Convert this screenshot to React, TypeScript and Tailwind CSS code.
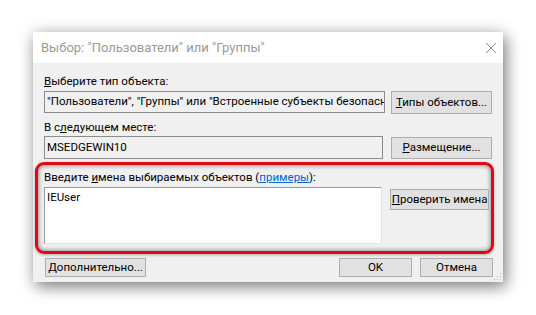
import React from "react";

const font = { fontFamily: 'Roboto, "Liberation Sans", Arial, sans-serif' };

const Btn: React.FC<{ className?: string; children: React.ReactNode }> = ({ className = "", children }) => (
  <div
    className={`flex items-center justify-center whitespace-nowrap bg-[#e1e1e1] border border-[#adadad] text-[11.5px] text-black leading-none ${className}`}
  >
    {children}
  </div>
);

const App: React.FC = () => {
  return (
    <div className="w-[536px] h-[315px] bg-white pt-[32px] pl-[33px] overflow-hidden" style={font}>
      <div className="relative w-[470px] h-[250px] bg-[#f0f0f0] flex flex-col shadow-[3px_5px_14px_rgba(0,0,0,0.45),0_0_18px_rgba(0,0,0,0.12)]">
        {/* title bar */}
        <div className="h-[31px] bg-white flex items-center justify-between pl-[8px] pr-[1px] shrink-0">
          <span className="text-[13px] text-[#9a9a9a]">Выбор: "Пользователи" или "Группы"</span>
          <svg width="22" height="22" viewBox="0 0 22 22">
            <path d="M6 6 L16 16 M16 6 L6 16" stroke="#8a8a8a" strokeWidth="1" fill="none" />
          </svg>
        </div>

        {/* body */}
        <div className="flex flex-col pl-[11px] pr-[10px] pt-[11px] text-[11.5px]">
          <div className="leading-[15px] text-black">
            <span className="underline">В</span>ыберите тип объекта:
          </div>
          <div className="flex items-start gap-[6px] mt-[2px]">
            <div className="w-[341px] h-[22px] border border-[#8c8c8c] bg-[#f0f0f0] flex items-center pl-[2px] overflow-hidden whitespace-nowrap text-black">
              "Пользователи", "Группы" или "Встроенные субъекты безопасности"
            </div>
            <Btn className="w-[101px] h-[23px]">
              <span><span className="underline">Т</span>ипы объектов...</span>
            </Btn>
          </div>

          <div className="leading-[15px] text-black mt-[6px]">
            В с<span className="underline">л</span>едующем месте:
          </div>
          <div className="flex items-start gap-[8px] mt-[1px]">
            <div className="w-[339px] h-[23px] border border-[#8c8c8c] bg-[#f0f0f0] flex items-center pl-[2px] text-black">
              MSEDGEWIN10
            </div>
            <Btn className="w-[101px] h-[22px] mt-[1px]">
              <span><span className="underline">Р</span>азмещение...</span>
            </Btn>
          </div>
        </div>

        {/* highlighted section */}
        <div className="mt-[3px] ml-[2px] mr-[9px] h-[92px] border-[3px] border-[#e30613] rounded-[9px] shadow-[inset_0_0_5px_rgba(0,0,0,0.55),0_1px_3px_rgba(0,0,0,0.3)] pl-[6px] pr-[2px] pt-[5px] flex flex-col text-[11.5px]">
          <div className="leading-[15px] text-black">
            Введите <span className="underline">и</span>мена выбираемых объектов (
            <span className="text-[#0066cc] underline">примеры</span>):
          </div>
          <div className="flex items-start gap-[8px] mt-[2px]">
            <div className="w-[339px] h-[57px] border border-[#9a9a9a] border-r-[#e3e3e3] border-b-[#e3e3e3] bg-white pl-[2px] pt-[2px] leading-[14px] text-black">
              IEUser
            </div>
            <Btn className="w-[99px] h-[21px] mt-[2px]">
              <span><span className="underline">П</span>роверить имена</span>
            </Btn>
          </div>
        </div>

        {/* bottom buttons */}
        <div className="flex items-start mt-[4px] pl-[12px] pr-[10px]">
          <Btn className="w-[101px] h-[19px]">
            <span><span className="underline">Д</span>ополнительно...</span>
          </Btn>
          <div className="flex-1" />
          <Btn className="w-[73px] h-[19px]">OK</Btn>
          <Btn className="w-[73px] h-[19px] ml-[8px]">Отмена</Btn>
        </div>

        {/* resize grip */}
        <svg width="8" height="8" viewBox="0 0 8 8" className="absolute right-[1px] bottom-[1px]">
          <rect x="6" y="0" width="1" height="1" fill="#b8b8b8" />
          <rect x="3" y="3" width="1" height="1" fill="#b8b8b8" />
          <rect x="6" y="3" width="1" height="1" fill="#b8b8b8" />
          <rect x="0" y="6" width="1" height="1" fill="#b8b8b8" />
          <rect x="3" y="6" width="1" height="1" fill="#b8b8b8" />
          <rect x="6" y="6" width="1" height="1" fill="#b8b8b8" />
        </svg>
      </div>
    </div>
  );
};

export default App;
